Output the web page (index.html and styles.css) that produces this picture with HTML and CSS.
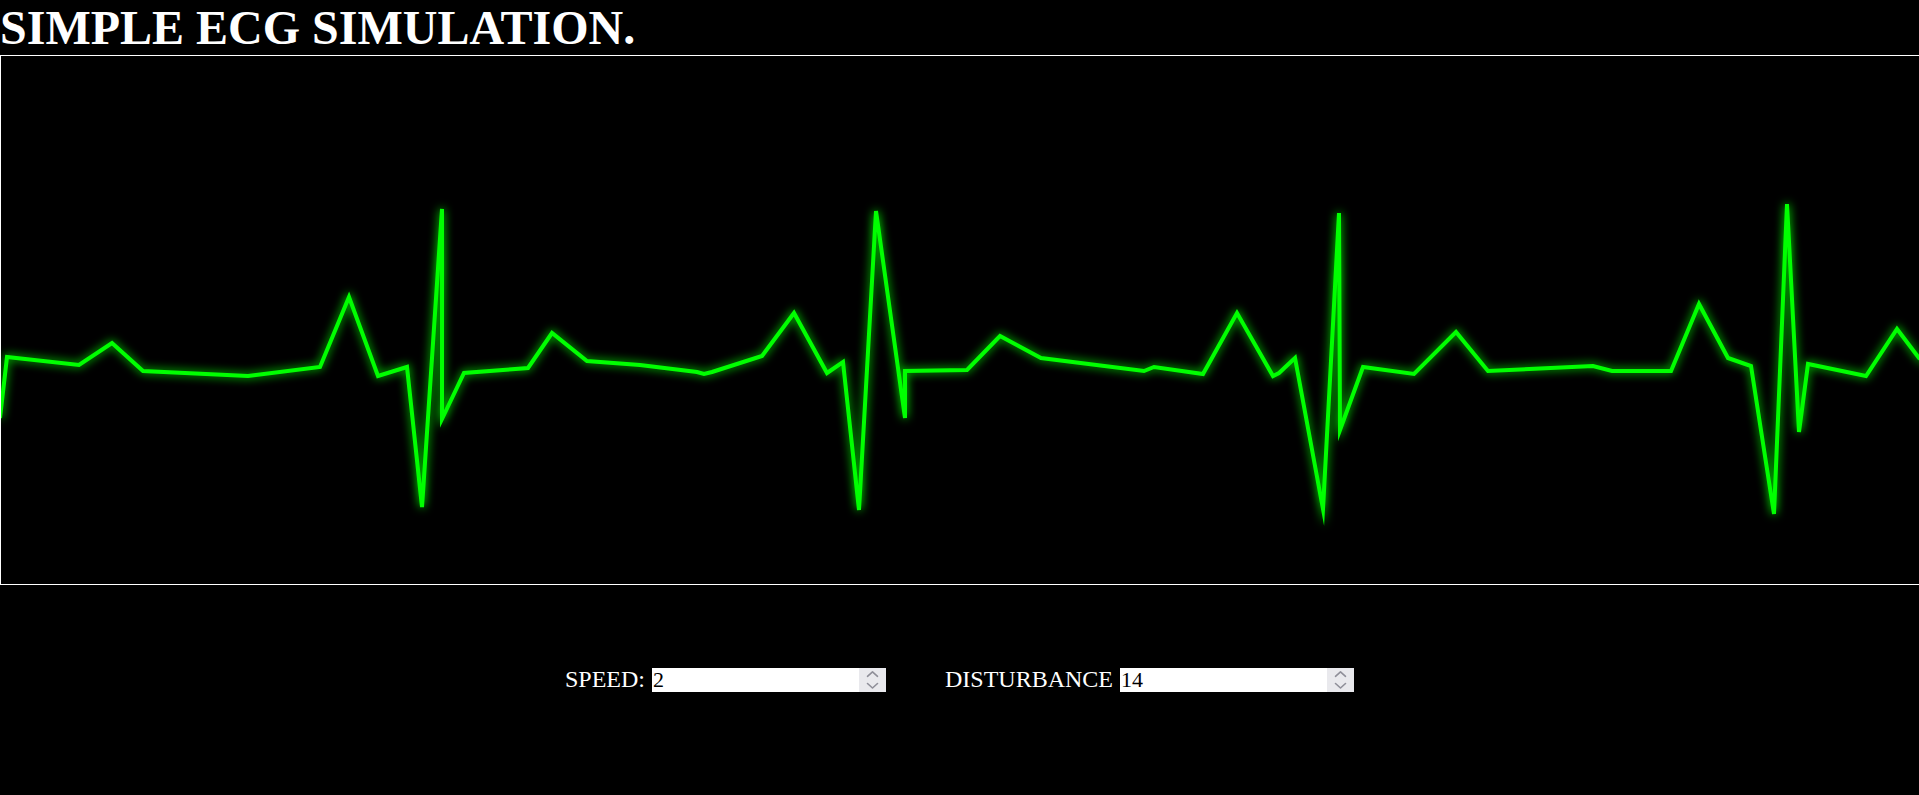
FILE: index.html
```html
<!DOCTYPE html>
<html lang="en">
<head>
<meta charset="utf-8">
<title>Simple ECG Simulation</title>
<link rel="stylesheet" href="styles.css">
</head>
<body>
<h1 class="title">SIMPLE ECG SIMULATION.</h1>
<div class="monitor">
  <svg class="trace" viewBox="1 56 1918 528" width="1918" height="528" preserveAspectRatio="none" aria-hidden="true">
    <polyline class="wave" points="0,418 7,357 79,365 112,343 143,371 248,376 320,367 349,297 378,376 407,367 422,507 442,209 442,419 464,373 528,368 552,333 587,361 640,365 697,372 704,374 712,372 762,356 794,313 827,373 843,362 859,510 876,211 905,418 905,371 967,370 1000,336 1041,358 1144,371 1154,367 1203,374 1237,313 1273,376 1279,373 1295,358 1323,509 1339,213 1340,430 1363,367 1414,374 1456,332 1488,371 1593,366 1612,371 1671,371 1699,304 1728,358 1751,366 1774,514 1787,204 1799,432 1808,364 1866,376 1897,329 1919,358 1925,362"/>
  </svg>
</div>
<div class="controls">
  <label class="field">
    <span class="label">SPEED:</span>
    <span class="num">
      <input class="num-input" type="number" value="2">
      <span class="spin">
        <svg viewBox="0 0 27 24" width="27" height="24" aria-hidden="true">
          <polyline points="8.5,8.3 13.5,3.8 18.5,8.3"/>
          <polyline points="8.5,15.5 13.5,20 18.5,15.5"/>
        </svg>
      </span>
    </span>
  </label>
  <label class="field">
    <span class="label">DISTURBANCE</span>
    <span class="num">
      <input class="num-input" type="number" value="14">
      <span class="spin">
        <svg viewBox="0 0 27 24" width="27" height="24" aria-hidden="true">
          <polyline points="8.5,8.3 13.5,3.8 18.5,8.3"/>
          <polyline points="8.5,15.5 13.5,20 18.5,15.5"/>
        </svg>
      </span>
    </span>
  </label>
</div>
</body>
</html>
```

FILE: styles.css
```css
html, body {
  margin: 0;
  padding: 0;
  background: #000;
  color: #fff;
  font-family: "Liberation Serif", "Times New Roman", serif;
  overflow: hidden;
}

.title {
  margin: 0;
  font-size: 48px;
  font-weight: bold;
  line-height: normal;
  color: #fff;
}

.monitor {
  border-top: 1px solid #fff;
  border-left: 1px solid #fff;
  border-bottom: 1px solid #fff;
  height: 528px;
  overflow: hidden;
  background: #000;
}

.trace {
  display: block;
}

.wave {
  fill: none;
  stroke: #00ff00;
  stroke-width: 4;
  stroke-linejoin: miter;
  stroke-miterlimit: 10;
  filter: drop-shadow(0 0 5px #00ff00);
}

.controls {
  display: flex;
  justify-content: center;
  gap: 59px;
  margin-top: 81px;
}

.field {
  display: flex;
  align-items: center;
  gap: 7px;
}

.label {
  font-size: 24px;
  line-height: normal;
  color: #fff;
}

.num {
  display: flex;
  width: 234px;
  height: 24px;
  background: #fff;
}

.num-input {
  flex: 1;
  min-width: 0;
  border: 0;
  outline: none;
  padding: 0 0 0 1px;
  margin: 0;
  height: 24px;
  background: transparent;
  color: #000;
  font-family: "Liberation Serif", "Times New Roman", serif;
  font-size: 22px;
  -moz-appearance: textfield;
  appearance: textfield;
}

.num-input::-webkit-inner-spin-button,
.num-input::-webkit-outer-spin-button {
  -webkit-appearance: none;
  margin: 0;
}

.spin {
  width: 27px;
  height: 24px;
  background: #e9e9ed;
  display: flex;
}

.spin svg {
  display: block;
}

.spin polyline {
  fill: none;
  stroke: #8f8f99;
  stroke-width: 1.6;
  stroke-linecap: round;
  stroke-linejoin: round;
}
```
